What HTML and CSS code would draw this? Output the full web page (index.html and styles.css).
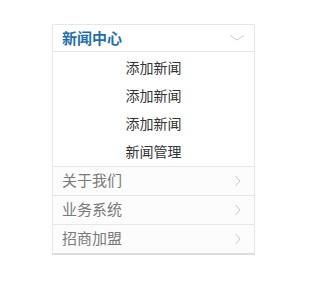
FILE: index.html
```html
<!DOCTYPE html>
<html>
<head>
<meta charset="utf-8">
<link rel="stylesheet" href="styles.css">
</head>
<body>
<div class="page">
  <div class="menu">
    <div class="head open">
      <span class="title">新闻中心</span>
      <svg class="chev down" width="16" height="8" viewBox="0 0 16 8"><path d="M1 1.5 L8 6 L15 1.5" fill="none" stroke="#cccccc" stroke-width="1"/></svg>
    </div>
    <ul class="sub">
      <li>添加新闻</li>
      <li>添加新闻</li>
      <li>添加新闻</li>
      <li>新闻管理</li>
    </ul>
    <div class="head">
      <span class="label">关于我们</span>
      <svg class="chev" width="8" height="12" viewBox="0 0 8 12"><path d="M1.5 1 L6 6 L1.5 11" fill="none" stroke="#c8c8c8" stroke-width="1"/></svg>
    </div>
    <div class="head">
      <span class="label">业务系统</span>
      <svg class="chev" width="8" height="12" viewBox="0 0 8 12"><path d="M1.5 1 L6 6 L1.5 11" fill="none" stroke="#c8c8c8" stroke-width="1"/></svg>
    </div>
    <div class="head last">
      <span class="label">招商加盟</span>
      <svg class="chev" width="8" height="12" viewBox="0 0 8 12"><path d="M1.5 1 L6 6 L1.5 11" fill="none" stroke="#c8c8c8" stroke-width="1"/></svg>
    </div>
  </div>
</div>
</body>
</html>
```
FILE: styles.css
```css
html, body {
  margin: 0;
  padding: 0;
  background: #ffffff;
}
.page {
  padding: 24px 0 0 52px;
  font-family: "Noto Sans CJK SC", "Noto Sans", sans-serif;
}
.menu {
  width: 201px;
  border: 1px solid #e6e6e6;
  border-bottom: 2px solid #dcdcd8;
  background: #fdfdfd;
}
.head {
  display: flex;
  align-items: center;
  justify-content: space-between;
  height: 28px;
  padding: 0 9px 0 9px;
  border-top: 1px solid #e6e6e6;
  background: #fcfcfc;
}
.head.open {
  border-top: none;
  height: 26px;
  border-bottom: 1px solid #e6e6e6;
  background: #ffffff;
}
.title {
  font-size: 15px;
  line-height: 20px;
  font-weight: bold;
  color: #1e6fae;
}
.label {
  font-size: 15px;
  line-height: 20px;
  margin-top: -2px;
  color: #7a7a7a;
}
.chev.down {
  margin-right: 0;
}
.chev {
  margin-right: 3px;
}
.sub {
  list-style: none;
  margin: 0;
  padding: 1px 0 1px 0;
  background: #ffffff;
}
.sub li {
  height: 28px;
  line-height: 28px;
  text-align: center;
  font-size: 14px;
  color: #333333;
}
```
